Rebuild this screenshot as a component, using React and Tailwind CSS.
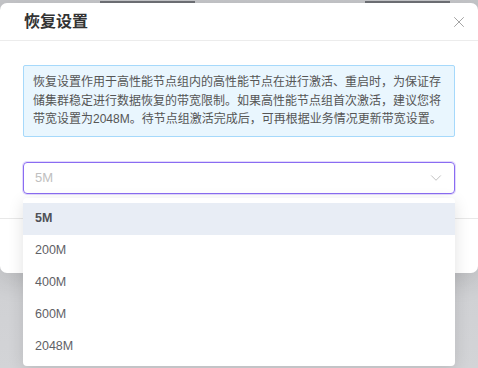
import { ChevronDown, X } from "lucide-react";

const options = ["5M", "200M", "400M", "600M", "2048M"];

const notice = [
  "恢复设置作用于高性能节点组内的高性能节点在进行激活、重启时，为保证存",
  "储集群稳定进行数据恢复的带宽限制。如果高性能节点组首次激活，建议您将",
  "带宽设置为2048M。待节点组激活完成后，可再根据业务情况更新带宽设置。",
];

const App = () => {
  const selected = "5M";

  return (
    <div
      className="relative w-[478px] h-[368px] overflow-hidden bg-gradient-to-b from-[#c4c5c8] to-[#d3d4d7]"
      style={{ fontFamily: '"Liberation Sans", "Noto Sans CJK SC", sans-serif' }}
    >
      {/* page behind the mask */}
      <div className="h-[3px] flex items-end overflow-hidden">
        <div className="ml-[100px] w-[95px] h-[2px] bg-[#6b6d72]" />
        <div className="ml-[170px] w-[85px] h-[2px] bg-[#6b6d72]" />
      </div>

      {/* dialog */}
      <div className="bg-white rounded-[7px] shadow-[0_8px_24px_rgba(0,0,0,0.12)] h-[270px] flex flex-col">
        <div className="h-[38px] flex items-center justify-between pl-6 pr-[10px] border-b border-[#ececec]">
          <h2 className="text-[16px] font-bold text-[#333]">恢复设置</h2>
          <X size={18} strokeWidth={1.2} className="text-[#9a9a9a]" />
        </div>

        <div className="px-[23px] pt-[24px] pb-[24px] border-b border-[#e8e8e8]">
          <div className="border border-[#a6d9fb] bg-[#e9f6fe] rounded-[2px] pl-[9px] pr-[4px] py-[7px] text-[12px] leading-[18.5px] text-[#555]">
            {notice.map((line) => (
              <p key={line} className="whitespace-nowrap">
                {line}
              </p>
            ))}
          </div>

          <div className="relative mt-[25px]">
            <div className="h-[32px] rounded-[4px] border border-[#8a6cf2] shadow-[0_0_0_1px_rgba(138,108,242,0.25)] flex items-center justify-between pl-[11px] pr-[9px]">
              <span className="text-[13px] text-[#c0c0c0]">{selected}</span>
              <ChevronDown size={18} strokeWidth={1.1} className="text-[#b5b5b5]" />
            </div>

            <ul className="absolute left-0 right-0 top-[36px] z-10 bg-white rounded-[4px] pt-[5px] pb-[3px] shadow-[0_4px_16px_rgba(0,0,0,0.12)]">
              {options.map((opt) => (
                <li
                  key={opt}
                  className={
                    opt === selected
                      ? "h-[32px] flex items-center px-[12px] text-[12.5px] font-bold text-[#4f5156] bg-[#e8edf5]"
                      : "h-[32px] flex items-center px-[12px] text-[12.5px] text-[#5f6166]"
                  }
                >
                  {opt}
                </li>
              ))}
            </ul>
          </div>
        </div>

        <div className="flex-1" />
      </div>
    </div>
  );
};

export default App;
